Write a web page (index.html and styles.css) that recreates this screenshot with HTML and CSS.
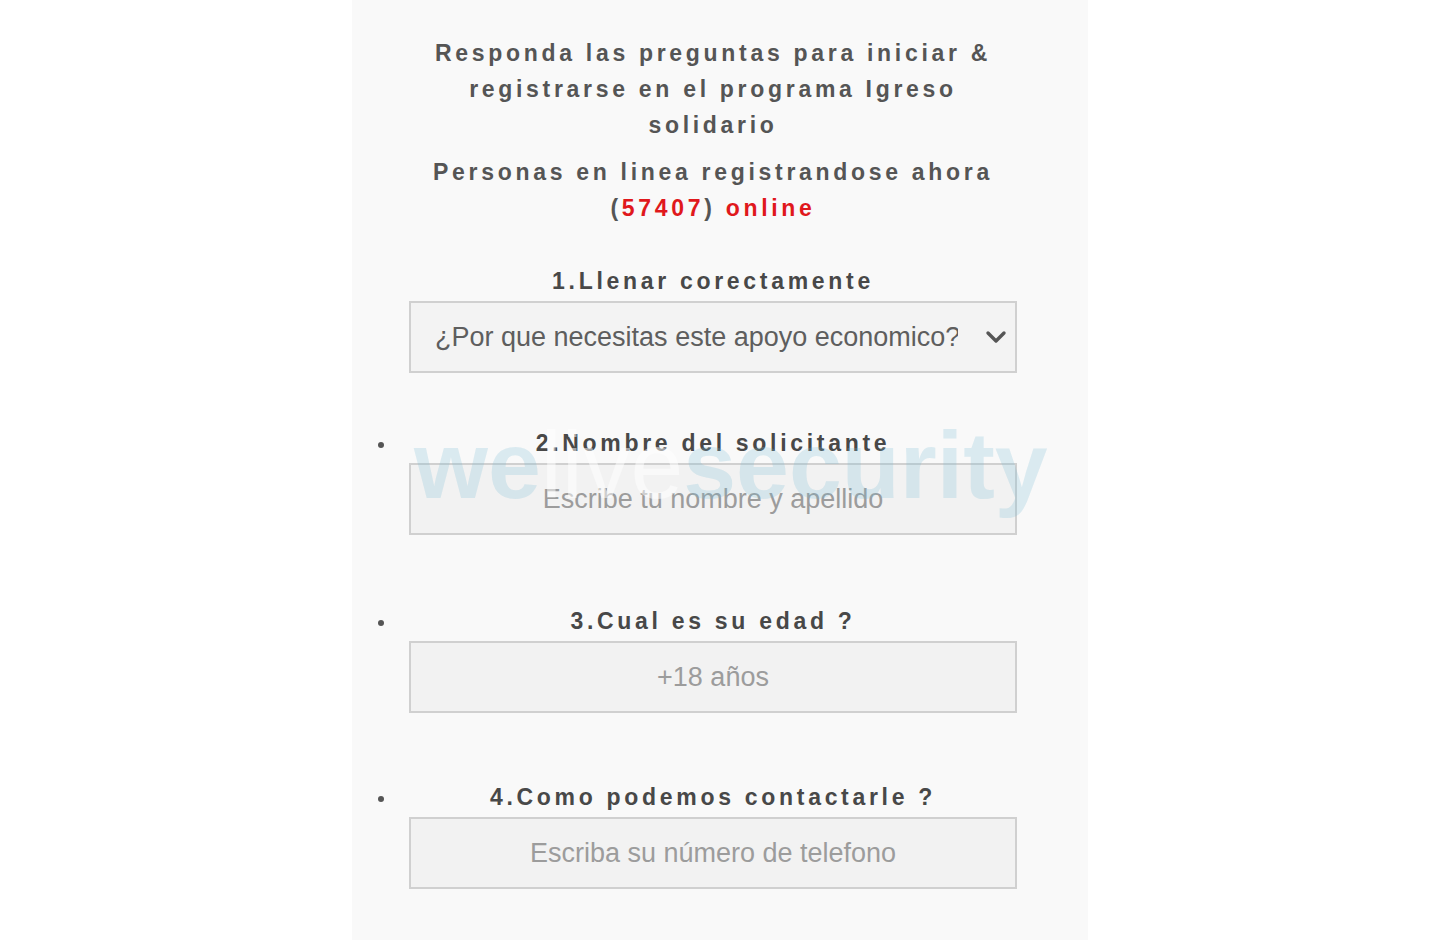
FILE: index.html
```html
<!DOCTYPE html>
<html lang="es">
<head>
<meta charset="utf-8">
<title>Igreso solidario</title>
<link rel="stylesheet" href="styles.css">
</head>
<body>
<main class="column">
  <div class="inner">
    <p class="intro">Responda las preguntas para iniciar &amp; registrarse en el programa Igreso solidario</p>
    <p class="intro online-line">Personas en linea registrandose ahora (<span class="red">57407</span>) <span class="red">online</span></p>

    <div class="field first">
      <label class="label" for="motivo">1.Llenar corectamente</label>
      <div class="select-wrap">
        <select id="motivo" class="box select">
          <option>¿Por que necesitas este apoyo economico?</option>
        </select>
        <svg class="chevron" width="22" height="14" viewBox="0 0 22 14" aria-hidden="true">
          <polyline points="3,3 11,11 19,3" fill="none" stroke="#555" stroke-width="3.4" stroke-linecap="round" stroke-linejoin="round"/>
        </svg>
      </div>
    </div>

    <ul class="questions">
      <li class="field q2">
        <label class="label" for="nombre">2.Nombre del solicitante</label>
        <input id="nombre" class="box input" type="text" placeholder="Escribe tu nombre y apellido">
      </li>
      <li class="field q3">
        <label class="label" for="edad">3.Cual es su edad ?</label>
        <input id="edad" class="box input" type="text" placeholder="+18 años">
      </li>
      <li class="field q4">
        <label class="label" for="tel">4.Como podemos contactarle ?</label>
        <input id="tel" class="box input" type="text" placeholder="Escriba su número de telefono">
      </li>
    </ul>
  </div>
  <div class="watermark" aria-hidden="true">we<span class="wm-live">live</span>security</div>
</main>
</body>
</html>
```

FILE: styles.css
```css
html, body {
  margin: 0;
  padding: 0;
  background: #ffffff;
}

body {
  font-family: "Liberation Sans", Arial, sans-serif;
}

.column {
  position: relative;
  width: 736px;
  min-height: 940px;
  margin: 0 auto;
  background: #f9f9f9;
  padding-top: 35px;
  box-sizing: border-box;
  overflow: hidden;
}

.inner {
  width: 608px;
  margin-left: 57px;
}

.intro {
  margin: 0;
  text-align: center;
  font-size: 23px;
  font-weight: bold;
  line-height: 36px;
  letter-spacing: 3.7px;
  color: #555555;
}

.online-line {
  margin-top: 11px;
}

.red {
  color: #e0181c;
}

.field {
  display: flex;
  flex-direction: column;
  gap: 2px;
}

.first {
  margin-top: 37px;
}

.label {
  text-align: center;
  font-size: 23px;
  font-weight: bold;
  line-height: 36px;
  letter-spacing: 3.7px;
  color: #484848;
}

.box {
  box-sizing: border-box;
  width: 608px;
  height: 72px;
  margin: 0;
  border: 2px solid #d0d0d0;
  border-radius: 0;
  background: #f2f2f2;
  font-family: "Liberation Sans", Arial, sans-serif;
  font-size: 27px;
  outline: none;
}

.select-wrap {
  position: relative;
}

.select {
  appearance: none;
  -webkit-appearance: none;
  padding: 0 57px 0 24px;
  color: #5e5e5e;
  background: #f3f3f3;
}

.chevron {
  position: absolute;
  right: 10px;
  top: 29px;
}

.input {
  text-align: center;
  color: #777777;
  padding: 0 10px;
}

.input::placeholder {
  color: #9c9c9c;
  opacity: 1;
}

.questions {
  list-style: none;
  margin: 52px 0 0;
  padding: 0;
}

.questions li {
  position: relative;
}

.questions li::before {
  content: "";
  position: absolute;
  left: -31px;
  top: 17px;
  width: 6px;
  height: 6px;
  border-radius: 50%;
  background: #555555;
}

.q3 {
  margin-top: 68px;
}

.q4 {
  margin-top: 66px;
}

.watermark {
  position: absolute;
  left: 62px;
  top: 418px;
  font-family: "Liberation Sans", Arial, sans-serif;
  font-size: 95px;
  font-weight: bold;
  line-height: 95px;
  color: rgba(120, 190, 215, 0.24);
  white-space: nowrap;
  pointer-events: none;
}

.wm-live {
  font-weight: normal;
  color: rgba(255, 255, 255, 0.5);
}
```
